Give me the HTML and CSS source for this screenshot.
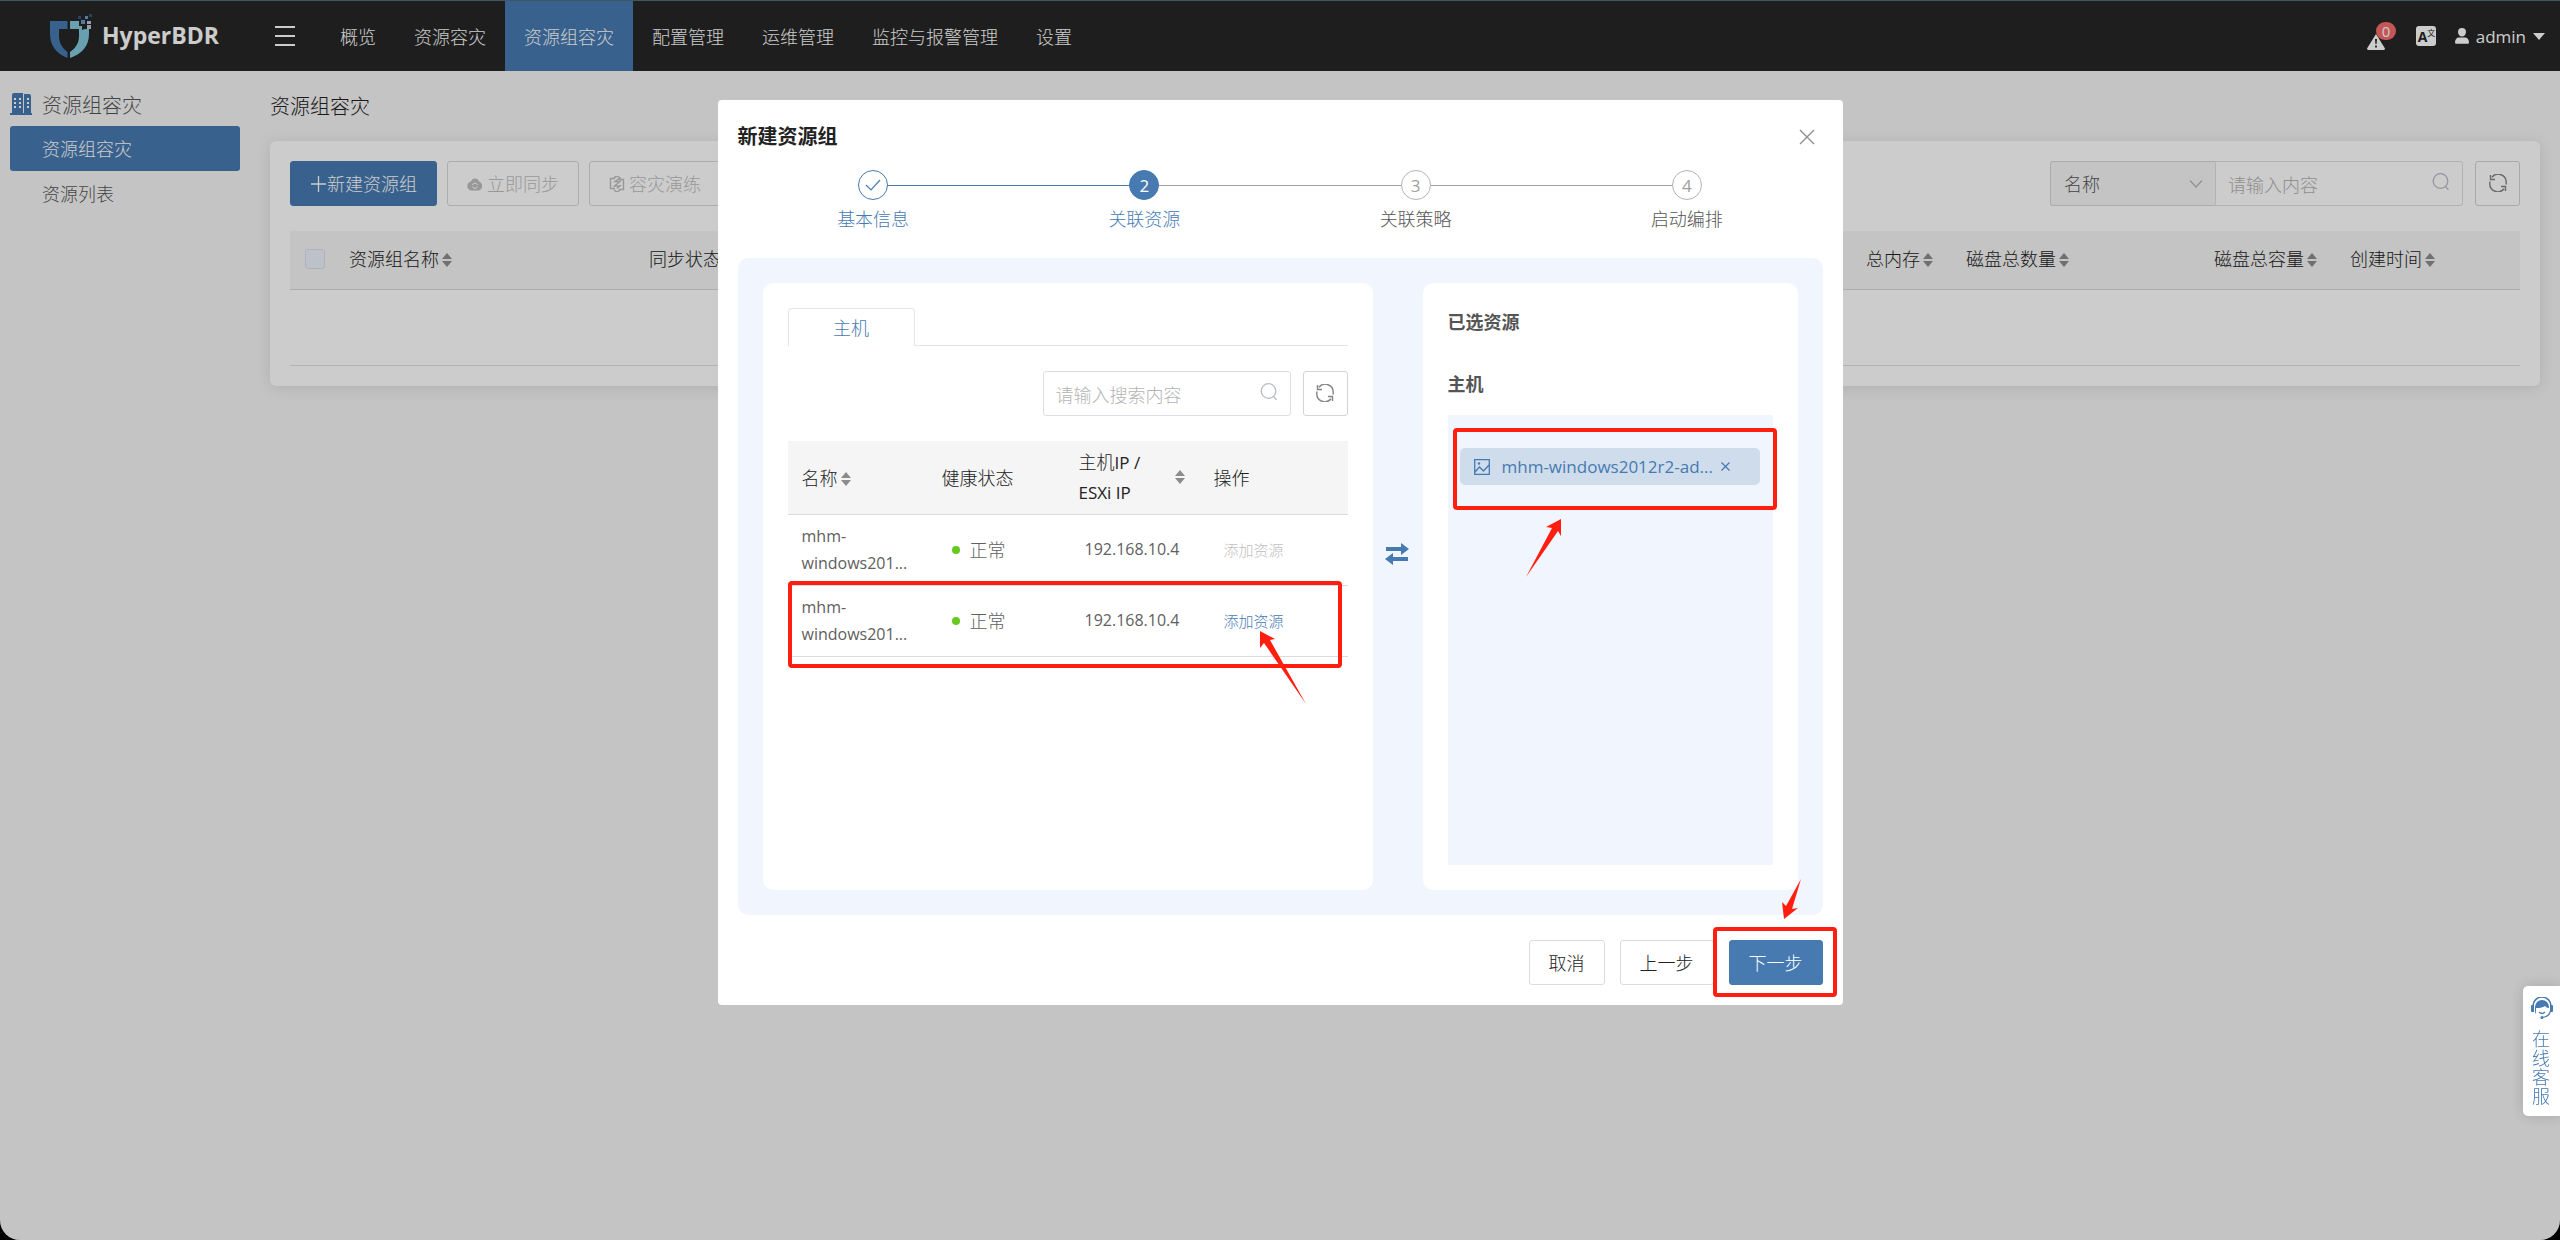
FILE: index.html
```html
<!DOCTYPE html>
<html lang="zh-CN">
<head>
<meta charset="utf-8">
<title>HyperBDR - 资源组容灾</title>
<meta name="viewport" content="width=device-width, initial-scale=1">
<link rel="stylesheet" href="styles.css">
</head>
<body>
<svg class="defs" width="0" height="0" aria-hidden="true">
  <symbol id="i-sort" viewBox="0 0 10 16"><path d="M5 1l5 6H0zM5 15l5-6H0z" fill="currentColor"/></symbol>
  <symbol id="i-search" viewBox="0 0 18 18"><circle cx="8.500" cy="8" r="7.300" fill="none" stroke="currentColor" stroke-width="1.300"/><path d="M13.500 13.500l3 3.300" stroke="currentColor" stroke-width="1.300"/></symbol>
  <symbol id="i-refresh" viewBox="0 0 18 18"><g fill="none" stroke="currentColor" stroke-width="1.400"><path d="M17.200 10.500V8.500A8 8 0 0 0 3 3.200M1.500 1v4.500H6"/><path d="M.8 7.500v2A8 8 0 0 0 15 14.800M16.500 17v-4.500H12"/></g></symbol>
</svg>

<header class="topbar">
  <a class="logo" href="#">
    <svg width="42" height="44" viewBox="0 0 42 44" aria-hidden="true">
      <path d="M0 7h17.500v8H9v7c0 7 3.500 12.500 8.500 16v6C7 40 0 32 0 20z" fill="#467ab1"/>
      <path d="M20 7h9v5h3v4l3-1h4v5c0 12-7 20-19 24v-6c5.500-3.500 9-9 9-16v-7h-9z" fill="#82c8dc"/>
      <path d="M28 2h3v3h-3zM39 0h3v3h-3z" fill="#2d5580"/>
      <path d="M31 6h4v4h-4zM35 2h3v3h-3z" fill="#6d96c8"/>
      <path d="M37 7h4v3h-4zM37 11h4v4h-4z" fill="#b9c6d8"/>
    </svg>
    <span class="logo-text">HyperBDR</span>
  </a>
  <button class="burger" type="button" aria-label="菜单"><i></i><i></i><i></i></button>
  <nav class="nav">
    <a href="#">概览</a>
    <a href="#">资源容灾</a>
    <a href="#" class="on">资源组容灾</a>
    <a href="#">配置管理</a>
    <a href="#">运维管理</a>
    <a href="#">监控与报警管理</a>
    <a href="#">设置</a>
  </nav>
  <div class="tools">
    <a class="alarm" href="#" aria-label="告警">
      <svg width="18" height="16" viewBox="0 0 18 16"><path d="M9 0l9 14.500q0 1.500-1.500 1.500h-15Q0 16 0 14.500z" fill="#fff"/><path d="M8 5h2l-.4 5H8.400zM8.100 11.500h1.800v2H8.100z" fill="#262626"/></svg>
      <span class="badge">0</span>
    </a>
    <a class="lang" href="#" aria-label="语言"><b>A</b><small>文</small></a>
    <a class="user" href="#">
      <svg width="14" height="16" viewBox="0 0 14 16" aria-hidden="true"><path d="M7 0a4 4 0 0 1 4 4c0 2.500-1.700 4.600-4 4.600S3 6.500 3 4a4 4 0 0 1 4-4zM4 9.500h6c2.500 0 4 2 4 5q0 1.300-1.300 1.300H1.300Q0 15.800 0 14.500c0-3 1.500-5 4-5z" fill="#fff"/></svg>
      <span class="latin wide">admin</span>
      <i class="caret"></i>
    </a>
  </div>
</header>

<div class="shell">
  <aside class="side">
    <h2>
      <svg width="22" height="22" viewBox="0 0 22 22" aria-hidden="true"><path d="M2 2q0-2 2-2h9v20h1V1h5q2 0 2 2v17h1v2H0v-2h2z" fill="#467ab1"/><path d="M4 5h2v2H4zM9 5h2v2H9zM4 9h2v2H4zM9 9h2v2H9zM4 13h2v2H4zM9 13h2v2H9zM17 5h2v2h-2zM17 9h2v2h-2zM17 13h2v2h-2z" fill="#fff"/></svg>
      资源组容灾
    </h2>
    <a href="#" class="on">资源组容灾</a>
    <a href="#">资源列表</a>
  </aside>

  <main class="main">
    <h1>资源组容灾</h1>
    <section class="card">
      <div class="bar">
        <button type="button" class="btn primary"><svg width="17" height="16" viewBox="0 0 17 16" aria-hidden="true"><path d="M8.500 0v16M1 8h15" stroke="currentColor" stroke-width="1.300"/></svg>新建资源组</button>
        <button type="button" class="btn" disabled><svg class="gap" width="16" height="14" viewBox="0 0 16 14" aria-hidden="true"><path d="M4 4.500a4.200 4.200 0 0 1 8 0 4.800 4.800 0 0 1 0 9H4a4.600 4.600 0 0 1 0-9z" fill="currentColor"/><path d="M5.500 8a2.600 2.600 0 0 1 5 0M10.500 9.500a2.600 2.600 0 0 1-5 0" fill="none" stroke="#fff"/></svg>立即同步</button>
        <button type="button" class="btn" disabled><svg class="gap" width="16" height="16" viewBox="0 0 16 16" aria-hidden="true"><path d="M6 2.500H1.500v10H6M10 3.500h4.500v10H10M5 1.500L8 0l3 2-5 3.500h5L5.500 10H11l-3 2.500M11 14l-3 2-3-2" fill="none" stroke="currentColor" stroke-width="1.400"/></svg>容灾演练</button>
        <form class="query">
          <span class="pick">
            <select aria-label="查询字段"><option>名称</option></select>
            <svg width="14" height="8" viewBox="0 0 14 8" aria-hidden="true"><path d="M1 .5l6 6.500 6-6.500" fill="none" stroke="currentColor" stroke-width="1.200"/></svg>
          </span>
          <span class="field">
            <input type="text" placeholder="请输入内容" aria-label="内容">
            <svg width="18" height="18"><use href="#i-search"/></svg>
          </span>
          <button type="button" class="square" aria-label="刷新"><svg width="18" height="18"><use href="#i-refresh"/></svg></button>
        </form>
      </div>
      <table class="grid">
        <colgroup><col class="c-tick"><col class="c-name"><col><col class="c-mem"><col class="c-num"><col class="c-size"><col class="c-time"></colgroup>
        <thead>
          <tr>
            <th><input type="checkbox" aria-label="全选"></th>
            <th>资源组名称<svg class="sort"><use href="#i-sort"/></svg></th>
            <th>同步状态</th>
            <th>总内存<svg class="sort"><use href="#i-sort"/></svg></th>
            <th>磁盘总数量<svg class="sort"><use href="#i-sort"/></svg></th>
            <th>磁盘总容量<svg class="sort"><use href="#i-sort"/></svg></th>
            <th>创建时间<svg class="sort"><use href="#i-sort"/></svg></th>
          </tr>
        </thead>
        <tbody><tr><td colspan="7"></td></tr></tbody>
      </table>
    </section>
  </main>
</div>

<div class="mask">
  <div class="dialog" role="dialog" aria-labelledby="dlg-title">
    <div class="dlg-head">
      <h2 id="dlg-title">新建资源组</h2>
      <button type="button" class="close" aria-label="关闭"><svg width="16" height="16" viewBox="0 0 16 16"><path d="M1 1l14 14M15 1L1 15" stroke="currentColor" stroke-width="1.400"/></svg></button>
    </div>
    <ol class="steps">
      <li class="done"><span class="dot"><svg width="16" height="12" viewBox="0 0 16 12"><path d="M1 6l5 5L15 1" fill="none" stroke="currentColor" stroke-width="1.200"/></svg></span>基本信息</li>
      <li class="now"><span class="dot latin wide">2</span>关联资源</li>
      <li><span class="dot latin wide">3</span>关联策略</li>
      <li><span class="dot latin wide">4</span>启动编排</li>
    </ol>
    <div class="panel">
      <section class="box source">
        <div class="tabs"><button type="button" class="tab">主机</button></div>
        <div class="find">
          <span class="field">
            <input type="text" placeholder="请输入搜索内容" aria-label="搜索内容">
            <svg width="18" height="18"><use href="#i-search"/></svg>
          </span>
          <button type="button" class="square" aria-label="刷新"><svg width="18" height="18"><use href="#i-refresh"/></svg></button>
        </div>
        <table class="hosts">
          <colgroup><col class="h-name"><col class="h-state"><col class="h-ip"><col></colgroup>
          <thead>
            <tr>
              <th>名称<svg class="sort"><use href="#i-sort"/></svg></th>
              <th>健康状态</th>
              <th><div class="two"><span>主机<span class="latin wide">IP /<br>ESXi IP</span></span><svg class="sort"><use href="#i-sort"/></svg></div></th>
              <th>操作</th>
            </tr>
          </thead>
          <tbody>
            <tr>
              <td class="latin">mhm-<br>windows201...</td>
              <td><span class="ok">正常</span></td>
              <td class="ip latin">192.168.10.4</td>
              <td class="op"><button type="button" class="add" disabled>添加资源</button></td>
            </tr>
            <tr>
              <td class="latin">mhm-<br>windows201...</td>
              <td><span class="ok">正常</span></td>
              <td class="ip latin">192.168.10.4</td>
              <td class="op"><button type="button" class="add">添加资源</button></td>
            </tr>
          </tbody>
        </table>
      </section>
      <div class="swap">
        <svg width="24" height="22" viewBox="0 0 24 22" aria-hidden="true"><path d="M1 4h15V0l8 6-8 6V8H1zM23 14H8v-4L0 16l8 6v-4h15z" fill="#467ab1"/></svg>
      </div>
      <section class="box chosen">
        <h3>已选资源</h3>
        <h3>主机</h3>
        <div class="bin">
          <div class="tag">
            <svg width="16" height="16" viewBox="0 0 16 16" aria-hidden="true"><path d="M.7.700h14.600v14.600H.7zM1 13l4.500-5 4 4 5.500-6" fill="none" stroke="currentColor" stroke-width="1.300"/><circle cx="5" cy="4.500" r="1.200" fill="currentColor"/></svg>
            <span class="latin wide">mhm-windows2012r2-ad...</span>
            <button type="button" aria-label="移除"><svg width="9" height="9" viewBox="0 0 9 9"><path d="M.5.500l8 8M8.500.500l-8 8" stroke="currentColor" stroke-width="1.200"/></svg></button>
          </div>
        </div>
      </section>
    </div>
    <div class="foot">
      <button type="button" class="btn">取消</button>
      <button type="button" class="btn">上一步</button>
      <button type="button" class="btn primary">下一步</button>
    </div>
    <svg class="marks" width="1125" height="905" viewBox="0 0 1125 905" aria-hidden="true">
      <g fill="none" stroke="#ff1e10" stroke-width="4">
        <rect x="72" y="483" width="550" height="83" rx="2"/>
        <rect x="737" y="330" width="320" height="78" rx="2"/>
        <rect x="997" y="829" width="120" height="66" rx="2"/>
      </g>
      <g fill="#ff1e10">
        <path d="M542 531l15 8-5 1 36 64-42-61-4 5z"/>
        <path d="M843 419v17l-3-5-32 46 26-49-6-1z"/>
        <path d="M1066 819l-2-17 4 4 15-27-9 30 6-1z"/>
      </g>
    </svg>
  </div>
</div>

<a class="service" href="#">
  <svg width="22" height="22" viewBox="0 0 22 22" aria-hidden="true"><path d="M2 9a9 9 0 0 1 18 0" fill="none" stroke="#467ab1" stroke-width="1.500"/><path d="M4 10a7 7 0 0 1 14 0v1c-2 0-3-1-4-2-3 2-6 2-9 2v6q-1-1-1-3zM0 9q0-1 1-1h2v7H1q-1 0-1-1zM19 8h2q1 0 1 1v5q0 1-1 1h-2z" fill="#467ab1"/><path d="M19.500 14c-1 4-4 6-8 6.500M8 15q3 3 6 0" fill="none" stroke="#467ab1" stroke-width="1.200"/><circle cx="11" cy="20.500" r="1.500" fill="#467ab1"/></svg>
  <span>在线客服</span>
</a>
</body>
</html>
```
FILE: styles.css
```css
* { box-sizing: border-box; }

html { background: #000; }

body {
  margin: 0;
  min-height: 100vh;
  overflow: hidden;
  border-radius: 0 0 20px 20px;
  background: #f5f5f5;
  color: #222;
  font: 300 18px/27px "Noto Sans CJK SC", "Open Sans", sans-serif;
}

h1, h2, h3, ol { margin: 0; padding: 0; font-weight: inherit; }
a { color: inherit; text-decoration: none; }
button, input, select { margin: 0; font: inherit; color: inherit; }
button { padding: 0; border: 0; background: none; }
svg { display: block; flex: none; }
.defs { position: absolute; }

.latin { font-family: "Open Sans", "Noto Sans CJK SC", sans-serif; font-size: 16px; font-weight: 400; }
.wide { font-size: 17px; }

/* top bar */
.topbar {
  display: flex;
  align-items: center;
  height: 71px;
  border-top: 1px solid #4f6d76;
  background: #262626;
  color: #fff;
}
.logo { display: flex; align-items: center; gap: 10px; width: 225px; margin-left: 50px; }
.logo-text { font: 700 23px/30px "Open Sans", sans-serif; padding-bottom: 2px; }
.burger { display: flex; flex-direction: column; gap: 7px; width: 20px; }
.burger i { height: 2px; background: #fff; }
.nav { display: flex; height: 100%; margin-left: 26px; }
.nav a { padding: 0 19px; line-height: 70px; }
.nav .on { background: #467ab1; }
.tools { display: flex; align-items: center; margin-left: auto; padding-right: 15px; }
.alarm { position: relative; padding: 12px 0 0; margin-right: 31px; }
.badge {
  position: absolute;
  left: 9px;
  top: 0;
  padding: 0 6px;
  border-radius: 9px;
  background: #f56c6c;
  font: 400 15px/18px "Open Sans", sans-serif;
}
.lang {
  display: flex;
  width: 20px;
  height: 20px;
  padding-left: 2px;
  margin-right: 19px;
  border-radius: 3px;
  background: #fff;
  color: #262626;
}
.lang b { font: 700 14px/22px "Open Sans", sans-serif; }
.lang small { font-size: 8px; line-height: 14px; font-weight: 400; }
.user { display: flex; align-items: center; gap: 7px; }
.caret { border: 6px solid transparent; border-top: 7px solid #fff; border-bottom: 0; }

/* page */
.shell { display: flex; gap: 30px; padding: 0 20px 0 10px; }
.side { width: 230px; }
.side h2 { display: flex; align-items: center; gap: 10px; height: 55px; padding-top: 11px; font-size: 20px; color: #555; }
.side a { display: block; padding-left: 32px; border-radius: 3px; line-height: 45px; color: #555; }
.side .on { background: #467ab1; color: #fff; }
.main { flex: 1; }
.main h1 { padding: 20px 0; font-size: 20px; line-height: 30px; }
.card { padding: 20px; border-radius: 6px; background: #fff; box-shadow: 0 2px 15px rgba(0, 0, 0, .1); }

.bar { display: flex; gap: 10px; }
.btn {
  display: flex;
  align-items: center;
  justify-content: center;
  height: 45px;
  padding: 0 20px;
  border: 1px solid #dcdcdc;
  border-radius: 3px;
  background: #fff;
}
.btn:disabled { color: #bfbfbf; border-color: #d8d8d8; }
.btn.primary { border-color: #467ab1; background: #467ab1; color: #fff; }
.gap { margin-right: 4px; }
.card .btn { padding: 0 19px; }
.query { display: flex; margin-left: auto; }
.pick { display: flex; align-items: center; width: 165px; height: 45px; border: 1px solid #d8d8d8; border-right: 0; border-radius: 3px 0 0 3px; background: #f5f5f5; color: #b4b4bc; }
.pick select { flex: 1; height: 100%; padding: 0 13px; border: 0; background: none; appearance: none; color: #555; }
.pick svg { margin-right: 12px; }
.field { display: flex; align-items: center; width: 248px; height: 45px; padding: 0 12px; border: 1px solid #dcdfe6; border-radius: 3px; color: #b8bcc6; }
.field input { flex: 1; width: 0; height: 100%; padding: 0; border: 0; outline: 0; background: none; color: #555; }
.field input::placeholder { color: #b4b4b4; opacity: 1; }
.field svg { margin-bottom: 4px; }
.query .field { border-radius: 0 3px 3px 0; }
.square { display: flex; align-items: center; justify-content: center; width: 45px; height: 45px; margin-left: 12px; border: 1px solid #d4d4d4; border-radius: 3px; color: #858585; }
.square svg { margin-bottom: 2px; }

table { width: 100%; border-collapse: collapse; table-layout: fixed; }
th, td { padding: 0 0 0 13px; text-align: left; font-weight: inherit; }
.sort { display: inline-block; width: 10px; height: 16px; margin-left: 3px; vertical-align: -2px; color: #8c8c8c; }

.grid { margin-top: 25px; }
.grid th { height: 58px; padding-bottom: 2px; border-bottom: 1px solid #d8d8d8; background: #f5f5f5; }
.grid td { height: 76px; border-bottom: 1px solid #e0e0e0; }
.grid input { display: block; width: 20px; height: 20px; margin: 0 0 0 2px; border: 1px solid #dcdfe6; border-radius: 3px; background: #edf2fc; appearance: none; }
.c-tick { width: 46px; }
.c-name { width: 300px; }
.c-mem { width: 100px; }
.c-num { width: 248px; }
.c-size { width: 136px; }
.c-time { width: 183px; }

/* dialog */
.mask { position: fixed; inset: 0; display: flex; justify-content: center; align-items: flex-start; padding-top: 100px; border-radius: 0 0 20px 20px; background: rgba(0, 0, 0, .2); }
.dialog { position: relative; width: 1125px; padding: 20px; border-radius: 4px; background: #fff; }
.dlg-head { display: flex; justify-content: space-between; padding: 2px 8px 0 0; }
.dlg-head h2 { font-size: 20px; line-height: 28px; font-weight: 700; }
.close { padding-top: 2px; color: #909090; }
.steps { display: flex; padding: 20px 0 26px; list-style: none; color: #555; }
.steps li { position: relative; flex: 1; display: flex; flex-direction: column; align-items: center; gap: 5px; }
.steps li + li::before { content: ""; position: absolute; right: 50%; top: 15px; width: 100%; height: 1px; background: #a0a0a0; }
.steps .dot { position: relative; z-index: 1; display: flex; align-items: center; justify-content: center; width: 30px; height: 30px; border: 1px solid #b4b4b4; border-radius: 50%; background: #fff; color: #a0a0a0; }
.steps .done, .steps .now { color: #467ab1; }
.steps .now::before { background: #467ab1 !important; }
.steps .done .dot { border-color: #467ab1; color: #467ab1; }
.steps .now .dot { border-color: #467ab1; background: #467ab1; color: #fff; }

.panel { display: flex; padding: 25px; border-radius: 10px; background: #f1f5fd; }
.box { padding: 25px; border-radius: 10px; background: #fff; }
.source { flex: 1; min-height: 607px; }
.swap { display: flex; justify-content: center; width: 50px; padding: 260px 2px 0 0; }
.chosen { width: 375px; color: #555; }

.tabs { display: flex; border-bottom: 1px solid #e4e4ee; }
.tab { width: 127px; height: 38px; margin-bottom: -1px; border: 1px solid #e4e4ee; border-bottom: 0; border-radius: 4px 4px 0 0; background: #fff; color: #467ab1; }
.find { display: flex; justify-content: flex-end; padding: 25px 0; }

.hosts { color: #606060; }
.hosts th, .hosts td { padding-left: 14px; }
.hosts thead { color: #222; line-height: 29px; }
.hosts th { height: 73px; border-bottom: 1px solid #dcdcdc; background: #f5f5f5; }
.hosts td { height: 71px; border-bottom: 1px solid #dcdcdc; }
.h-name { width: 140px; }
.h-state { width: 137px; }
.h-ip { width: 135px; }
.two { display: flex; align-items: center; justify-content: space-between; padding-right: 15px; }
.two .latin { line-height: 29px; }
.ok { display: flex; align-items: center; gap: 10px; padding-left: 10px; }
.ok::before { content: ""; width: 8px; height: 8px; border-radius: 50%; background: #67c91c; }
.hosts .ip { padding-left: 20px; }
.hosts .op { padding-left: 24px; }
.add { display: block; font-size: 15px; color: #467ab1; }
.add:disabled { color: #c0c0c0; }

.chosen h3 { margin-bottom: 35px; font-size: 18px; font-weight: 700; }
.chosen h3 + h3 { margin-bottom: 18px; }
.bin { height: 450px; padding: 33px 13px 0 12px; background: #f1f5fd; }
.tag { display: flex; align-items: center; height: 37px; padding: 0 14px; border-radius: 5px; background: #cfdceb; color: #467ab1; }
.tag .latin { margin: 0 8px 0 12px; }

.foot { display: flex; justify-content: flex-end; gap: 15px; padding-top: 25px; }
.foot .btn { padding: 0 19px; }
.marks { position: absolute; left: 0; top: 0; pointer-events: none; }

/* online service */
.service {
  position: fixed;
  right: 0;
  top: 986px;
  display: flex;
  flex-direction: column;
  align-items: center;
  gap: 10px;
  width: 37px;
  height: 130px;
  padding: 11px 9px 0;
  border-radius: 5px 0 0 5px;
  background: #fff;
  box-shadow: 0 0 15px rgba(0, 0, 0, .15);
  color: #467ab1;
  line-height: 19px;
}
```
